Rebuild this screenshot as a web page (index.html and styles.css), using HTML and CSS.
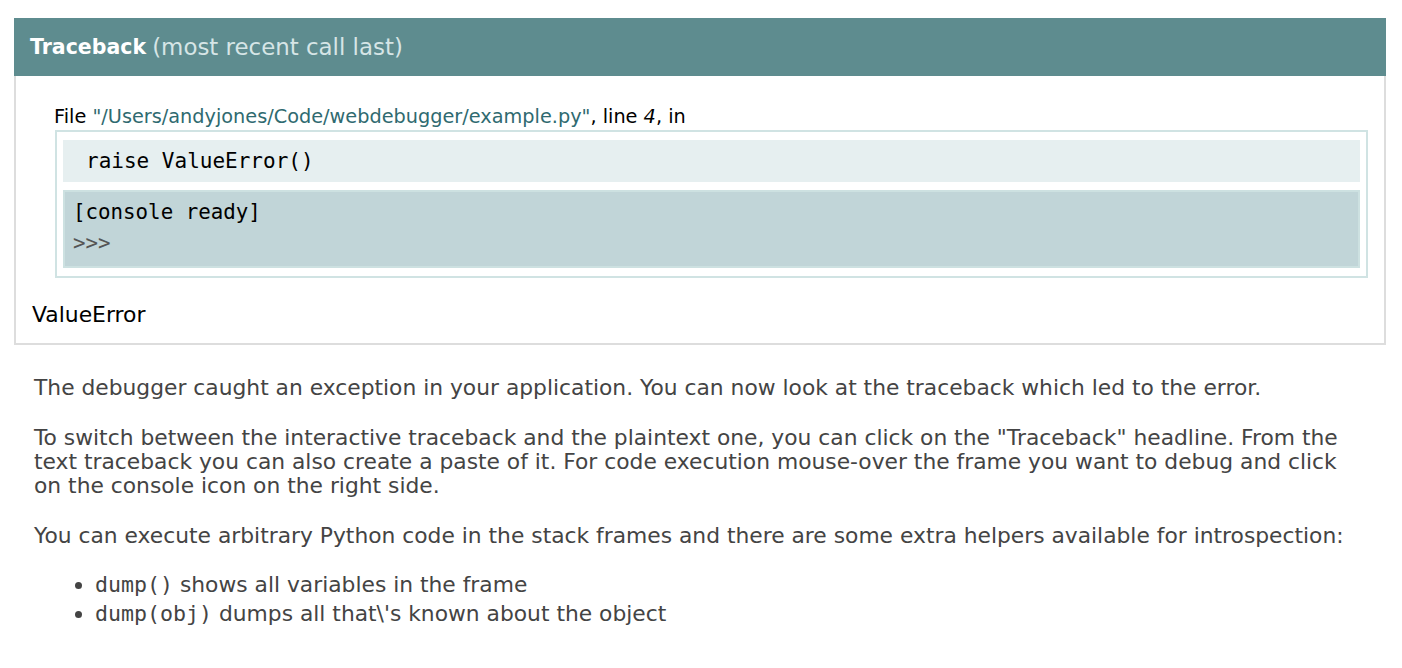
FILE: index.html
```html
<!DOCTYPE html>
<html>
<head>
<meta charset="utf-8">
<title>ValueError // Werkzeug Debugger</title>
<link rel="stylesheet" href="styles.css">
</head>
<body>
<div class="debugger">
  <div class="traceback">
    <h3 class="tb-title">Traceback <em>(most recent call last)</em></h3>
    <div class="tb-body">
      <ul class="frames">
        <li class="frame">
          <h4 class="frame-head">File <cite class="filename">"/Users/andyjones/Code/webdebugger/example.py"</cite>, line <em class="line">4</em>, in</h4>
          <div class="source">
            <pre class="code-line">raise ValueError()</pre>
            <div class="console">
              <div class="console-line">[console ready]</div>
              <div class="console-prompt">&gt;&gt;&gt;</div>
            </div>
          </div>
        </li>
      </ul>
      <blockquote class="exc">ValueError</blockquote>
    </div>
  </div>
  <div class="explanation">
    <p>The debugger caught an exception in your application. You can now look at the traceback which led to the error.</p>
    <p>To switch between the interactive traceback and the plaintext one, you can click on the "Traceback" headline. From the text traceback you can also create a paste of it. For code execution mouse-over the frame you want to debug and click on the console icon on the right side.</p>
    <p>You can execute arbitrary Python code in the stack frames and there are some extra helpers available for introspection:</p>
    <ul class="helpers">
      <li><code>dump()</code> shows all variables in the frame</li>
      <li><code>dump(obj)</code> dumps all that\'s known about the object</li>
    </ul>
  </div>
</div>
</body>
</html>
```

FILE: styles.css
```css
html, body {
  margin: 0;
  padding: 0;
  background: #ffffff;
}

.debugger {
  padding: 18px 16px 0 14px;
  font-family: "DejaVu Sans", Verdana, sans-serif;
  color: #000;
}

.tb-title {
  margin: 0;
  height: 58px;
  box-sizing: border-box;
  padding: 0 16px;
  display: flex;
  align-items: center;
  gap: 0.3em;
  background: #5e8c8f;
  color: #ffffff;
  font-size: 20.5px;
  font-weight: bold;
}

.tb-title em {
  font-style: normal;
  font-weight: normal;
  font-size: 22.9px;
  color: #d6e5e6;
}

.tb-body {
  border: 2px solid #dddddd;
  border-top: none;
  padding: 29px 16px 14px 16px;
}

.frames {
  list-style: none;
  margin: 0 0 23px 23px;
  padding: 0;
}

.frame-head {
  margin: 0 0 1px -1px;
  height: 24px;
  line-height: 24px;
  font-size: 19.3px;
  font-weight: normal;
}

.filename {
  font-style: normal;
  color: #2f6a70;
}

.line {
  font-style: italic;
}

.source {
  border: 2px solid #d0e3e3;
  padding: 8px 6px 8px 6px;
  display: flex;
  flex-direction: column;
  gap: 8px;
}

.code-line {
  margin: 0;
  height: 42px;
  line-height: 42px;
  padding-left: 23px;
  background: #e6eff0;
  font-family: "DejaVu Sans Mono", monospace;
  font-size: 21px;
}

.console {
  border: 2px solid #cde1e1;
  background: #c1d5d8;
  height: 78px;
  box-sizing: border-box;
  padding: 6px 8px;
  font-family: "DejaVu Sans Mono", monospace;
  font-size: 20.8px;
}

.console-line {
  height: 28px;
  line-height: 28px;
}

.console-prompt {
  height: 34px;
  line-height: 34px;
  color: #555555;
}

.exc {
  margin: 0;
  height: 28px;
  line-height: 28px;
  font-size: 21.9px;
}

.explanation {
  margin-top: 31px;
  padding: 0 34px 0 20px;
  color: #444444;
  font-size: 21.8px;
  line-height: 24px;
}

.explanation p {
  margin: 0 0 26px 0;
}

.helpers {
  margin: -4px 0 0 0;
  padding-left: 61px;
}

.helpers li {
  line-height: 29px;
}

.helpers code {
  font-family: "DejaVu Sans Mono", monospace;
  font-size: 21.6px;
}
```
